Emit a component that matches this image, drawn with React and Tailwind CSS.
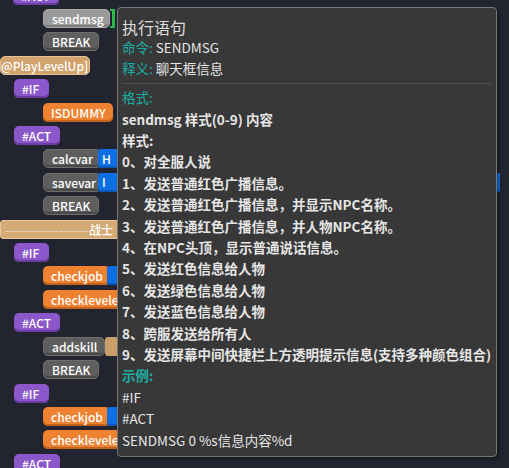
import React from 'react';

const FONT = { fontFamily: '"Noto Sans CJK SC", "Noto Sans", sans-serif' };

const TONES = {
  purple: 'bg-[#8b57ca] shadow-[inset_0_-2px_0_#6a3da3]',
  orange: 'bg-[#ee8230] shadow-[inset_0_-2px_0_#c4641c]',
  grey: 'bg-[#5e5e5e] border border-[#6e6e6e] shadow-[inset_0_-2px_0_#484848]',
  light: 'bg-[#9a9a9a] border border-[#aaaaaa] shadow-[inset_0_-2px_0_#7c7c7c]',
  tan: 'bg-[#d2a36c] border border-[#e4c194]',
  blue: 'bg-[#0c6fe3] shadow-[inset_0_-2px_0_#0a58b5]',
};

// stack of blocks behind the tooltip
const rows = [
  { tone: 'purple', text: '#ACT', ml: 'ml-[13px]', w: 'w-[46px]' },
  { tone: 'light', text: 'sendmsg', ml: 'ml-[43px]', w: 'w-[67px]', bracket: true },
  { tone: 'grey', text: 'BREAK', ml: 'ml-[43px]', w: 'w-[56px]' },
  { tone: 'tan', text: '@PlayLevelUp]', ml: 'ml-0', w: 'w-[90px]', flush: true },
  { tone: 'purple', text: '#IF', ml: 'ml-[14px]', w: 'w-[35px]' },
  { tone: 'orange', text: 'ISDUMMY', ml: 'ml-[43px]', w: 'w-[70px]' },
  { tone: 'purple', text: '#ACT', ml: 'ml-[14px]', w: 'w-[46px]' },
  { tone: 'grey', text: 'calcvar', ml: 'ml-[43px]', w: 'w-[58px]', blue: 'w-[200px]', blueText: 'H' },
  { tone: 'grey', text: 'savevar', ml: 'ml-[43px]', w: 'w-[58px]', blue: 'w-[402px]', blueText: 'I' },
  { tone: 'grey', text: 'BREAK', ml: 'ml-[43px]', w: 'w-[56px]' },
  { bar: true },
  { tone: 'purple', text: '#IF', ml: 'ml-[14px]', w: 'w-[35px]' },
  { tone: 'orange', text: 'checkjob', ml: 'ml-[43px]', w: 'w-[67px]', blue: 'w-[120px]', blueText: '' },
  { tone: 'orange', text: 'checklevelequal', ml: 'ml-[43px]', w: 'w-[120px]' },
  { tone: 'purple', text: '#ACT', ml: 'ml-[14px]', w: 'w-[46px]' },
  { tone: 'grey', text: 'addskill', ml: 'ml-[43px]', w: 'w-[62px]', notch: true },
  { tone: 'grey', text: 'BREAK', ml: 'ml-[43px]', w: 'w-[56px]' },
  { tone: 'purple', text: '#IF', ml: 'ml-[14px]', w: 'w-[35px]' },
  { tone: 'orange', text: 'checkjob', ml: 'ml-[43px]', w: 'w-[67px]', blue: 'w-[120px]', blueText: '' },
  { tone: 'orange', text: 'checklevelequal', ml: 'ml-[43px]', w: 'w-[120px]' },
  { tone: 'purple', text: '#ACT', ml: 'ml-[14px]', w: 'w-[46px]' },
];

const BlockRow = ({ row }) => {
  if (row.bar) {
    return (
      <div className="flex h-[19px] w-[420px] shrink-0 items-center overflow-hidden rounded-[3px] border border-[#e7c79f] bg-[#d6aa74] pl-[4px] text-[12px] leading-[17px] text-white">
        <span className="w-[84px] shrink-0 overflow-hidden whitespace-nowrap text-[#efdcc2]">
          ------------------------------
        </span>
        <span className="font-medium">战士</span>
      </div>
    );
  }
  return (
    <div className={`flex h-[19px] shrink-0 items-center ${row.ml}`}>
      <div
        className={`flex h-[19px] shrink-0 items-center overflow-hidden whitespace-nowrap rounded-[5px] ${row.flush ? 'pl-0' : 'pl-[8px]'} text-[12px] font-medium leading-[17px] text-white ${row.w} ${TONES[row.tone]}`}
      >
        {row.text}
      </div>
      {row.bracket && (
        <div className="h-[19px] w-[5px] shrink-0 border-y-2 border-r-[3px] border-[#2eb84c]" />
      )}
      {row.blue && (
        <div
          className={`-ml-[3px] flex h-[19px] shrink-0 items-center rounded-l-[3px] pl-[4px] text-[12px] font-medium text-white ${row.blue} ${TONES.blue}`}
        >
          {row.blueText}
        </div>
      )}
      {row.notch && <div className="h-[19px] w-[14px] shrink-0 rounded-[3px] bg-[#c9a06a]" />}
    </div>
  );
};

const Line = ({ children, bold, className = '' }) => (
  <div className={`h-[21.4px] whitespace-nowrap text-[13.5px] leading-[21.4px] ${bold ? 'font-semibold' : ''} ${className}`}>
    {children}
  </div>
);

const Label = ({ children }) => <span className="text-[#1aaea4]">{children}</span>;

const styles = [
  '0、对全服人说',
  '1、发送普通红色广播信息。',
  '2、发送普通红色广播信息，并显示NPC名称。',
  '3、发送普通红色广播信息，并人物NPC名称。',
  '4、在NPC头顶，显示普通说话信息。',
  '5、发送红色信息给人物',
  '6、发送绿色信息给人物',
  '7、发送蓝色信息给人物',
  '8、跨服发送给所有人',
  '9、发送屏幕中间快捷栏上方透明提示信息(支持多种颜色组合)',
];

export default function App() {
  return (
    <div className="relative h-[468px] w-[509px] overflow-hidden bg-[#22252f]" style={FONT}>
      <div className="-mt-[14.4px] flex flex-col gap-[4.42px]">
        {rows.map((row, i) => (
          <BlockRow key={i} row={row} />
        ))}
      </div>

      {/* Tooltip */}
      <div className="absolute left-[117px] top-[7px] h-[450px] w-[380px] rounded-[4px] border border-[#777777] bg-[#383838] px-[4px] pt-[9px] text-[#e6e6e6] shadow-[2px_2px_3px_rgba(0,0,0,0.35)]">
        <div className="h-[20px] text-[16px] leading-[20px] text-[#dedede]">执行语句</div>
        <Line>
          <Label>命令:</Label> SENDMSG
        </Line>
        <Line>
          <Label>释义:</Label> 聊天框信息
        </Line>
        <div className="mb-[3px] mt-[3px] h-[1.5px] w-[369px] bg-[#4d4d4d]" />
        <Line className="text-[#1aaea4]">格式:</Line>
        <Line bold>sendmsg 样式(0-9) 内容</Line>
        <Line bold>样式:</Line>
        {styles.map((s) => (
          <Line key={s} bold>
            {s}
          </Line>
        ))}
        <Line bold className="text-[#1aaea4]">示例:</Line>
        <Line>#IF</Line>
        <Line>#ACT</Line>
        <Line>SENDMSG 0 %s信息内容%d</Line>
      </div>
    </div>
  );
}
